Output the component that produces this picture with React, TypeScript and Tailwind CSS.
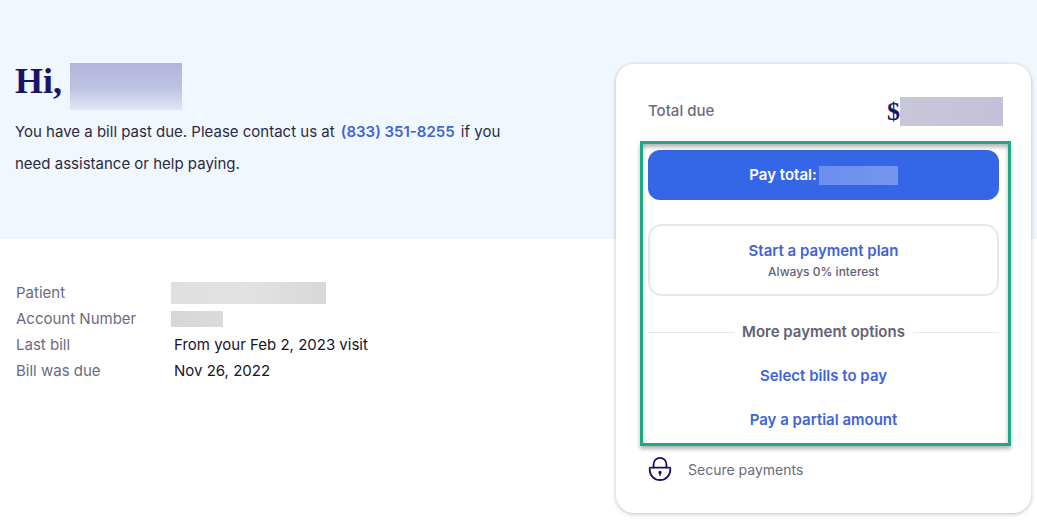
import { FC, ReactNode } from 'react'

interface DetailRowProps {
  label: string
  children: ReactNode
}

const DetailRow: FC<DetailRowProps> = ({ label, children }) => (
  <div className="flex h-[26px] items-center">
    <dt className="w-[155px] shrink-0 text-[#6b6b80]">{label}</dt>
    <dd className="text-[#14142b]">{children}</dd>
  </div>
)

const LockIcon = () => (
  <svg
    className="h-6 w-6"
    viewBox="0 0 24 24"
    fill="none"
    stroke="#1b1464"
    strokeWidth={1.8}
    strokeLinecap="round"
    strokeLinejoin="round"
    aria-hidden="true"
  >
    <path d="M5.600 10.600V7.100a6.400 6.200 0 0 1 12.800 0v3.500" />
    <path d="M2.500 10.600h19a.8.8 0 0 1 .8.8v1.400c0 5.800-4.600 10.200-10.300 10.200S1.700 18.600 1.700 12.800v-1.400a.8.8 0 0 1 .8-.8z" />
    <circle cx="12" cy="15.400" r="1.600" fill="#1b1464" stroke="none" />
    <path d="M12 15.500v3" strokeWidth={1.400} />
  </svg>
)

const PaymentCard = () => (
  <aside className="z-10 col-start-2 row-span-2 row-start-1 mt-16 mr-1.5 rounded-[18px] bg-white px-8 pt-[33px] pb-8 shadow-[0_1px_4px_rgba(40,40,70,0.3)]">
    <div className="-mr-1 flex h-[29px] items-center justify-between">
      <h2 className="font-medium text-[#6b6b80]">Total due</h2>
      <div className="flex items-center font-['Liberation_Serif'] text-[26px] font-bold text-[#1b1464]">
        $<span className="h-[29px] w-[103px] bg-linear-to-r from-[#c8c7da] to-[#c2c1d7]" />
      </div>
    </div>

    <div className="relative mt-6">
      <button
        type="button"
        className="flex h-[50px] w-full items-center justify-center gap-0.5 rounded-xl bg-[#3566e8] font-semibold text-white"
      >
        Pay total:
        <span className="h-[19px] w-[79px] bg-linear-to-r from-[#6b8ff0] to-[#7595ee]" />
      </button>
      <button
        type="button"
        className="mt-6 flex h-[72px] w-full flex-col items-center justify-center rounded-[14px] border-2 border-[#e8e7ec]"
      >
        <span className="leading-6 font-semibold text-[#3f64d9]">Start a payment plan</span>
        <span className="text-[12px] leading-[18px] font-medium text-[#5f5f74]">Always 0% interest</span>
      </button>

      <div className="mt-6 flex items-center gap-2 leading-6">
        <span className="h-px flex-1 bg-[#e6e6ea]" />
        <h3 className="font-semibold text-[#626276]">More payment options</h3>
        <span className="h-px flex-1 bg-[#e6e6ea]" />
      </div>
      <div className="mt-5 flex flex-col items-center gap-5 leading-6 font-semibold text-[#3f64d9]">
        <a href="#select-bills">Select bills to pay</a>
        <a href="#partial-amount">Pay a partial amount</a>
      </div>

      {/* highlight frame around the payment choices */}
      <div className="pointer-events-none absolute -top-[9px] -right-3 -bottom-3.5 -left-2 border-[3px] border-[#1ea888] shadow-[0_3px_4px_rgba(0,0,0,0.3),inset_0_3px_4px_rgba(0,0,0,0.3)]" />
    </div>

    <div className="mt-[25px] flex items-center gap-4 text-[#6b6b80]">
      <LockIcon />
      <p className="text-[14px]">Secure payments</p>
    </div>
  </aside>
)

export default function App() {
  return (
    <main className="grid min-h-screen grid-cols-[1fr_421px] grid-rows-[239px_auto] content-start bg-white pb-2 font-['Inter',sans-serif] text-[15px]">
      <header className="col-span-2 col-start-1 row-start-1 bg-[#f0f7ff] pt-[63px] pl-[15px]">
        <h1 className="flex h-[47px] gap-2 font-['Liberation_Serif'] text-[36px] leading-9 font-bold text-[#1b1464]">
          Hi,
          <span className="h-[47px] w-28 bg-linear-to-b from-[#b3b6da] via-[#bcc0e0] via-50% to-[#e2e7f6]" />
        </h1>
        <p className="mt-[6px] leading-8 text-[#2b2b40]">
          You have a bill past due. Please contact us at{' '}
          <a href="tel:8333518255" className="px-0.5 font-semibold text-[#3f64d9]">
            (833) 351-8255
          </a>{' '}
          if you
          <br />
          need assistance or help paying.
        </p>
      </header>

      <dl className="col-start-1 row-start-2 pt-[41px] pl-4">
        <DetailRow label="Patient">
          <div className="h-[22px] w-[155px] bg-linear-to-r from-[#e0e0e0] via-[#e2e2e2] to-[#d8d8d9]" />
        </DetailRow>
        <DetailRow label="Account Number">
          <div className="h-4 w-[52px] bg-linear-to-r from-[#d5d6d8] to-[#dadbdd]" />
        </DetailRow>
        <DetailRow label="Last bill">
          <span className="pl-[3px]">From your Feb 2, 2023 visit</span>
        </DetailRow>
        <DetailRow label="Bill was due">
          <span className="pl-[3px]">Nov 26, 2022</span>
        </DetailRow>
      </dl>

      <PaymentCard />
    </main>
  )
}
